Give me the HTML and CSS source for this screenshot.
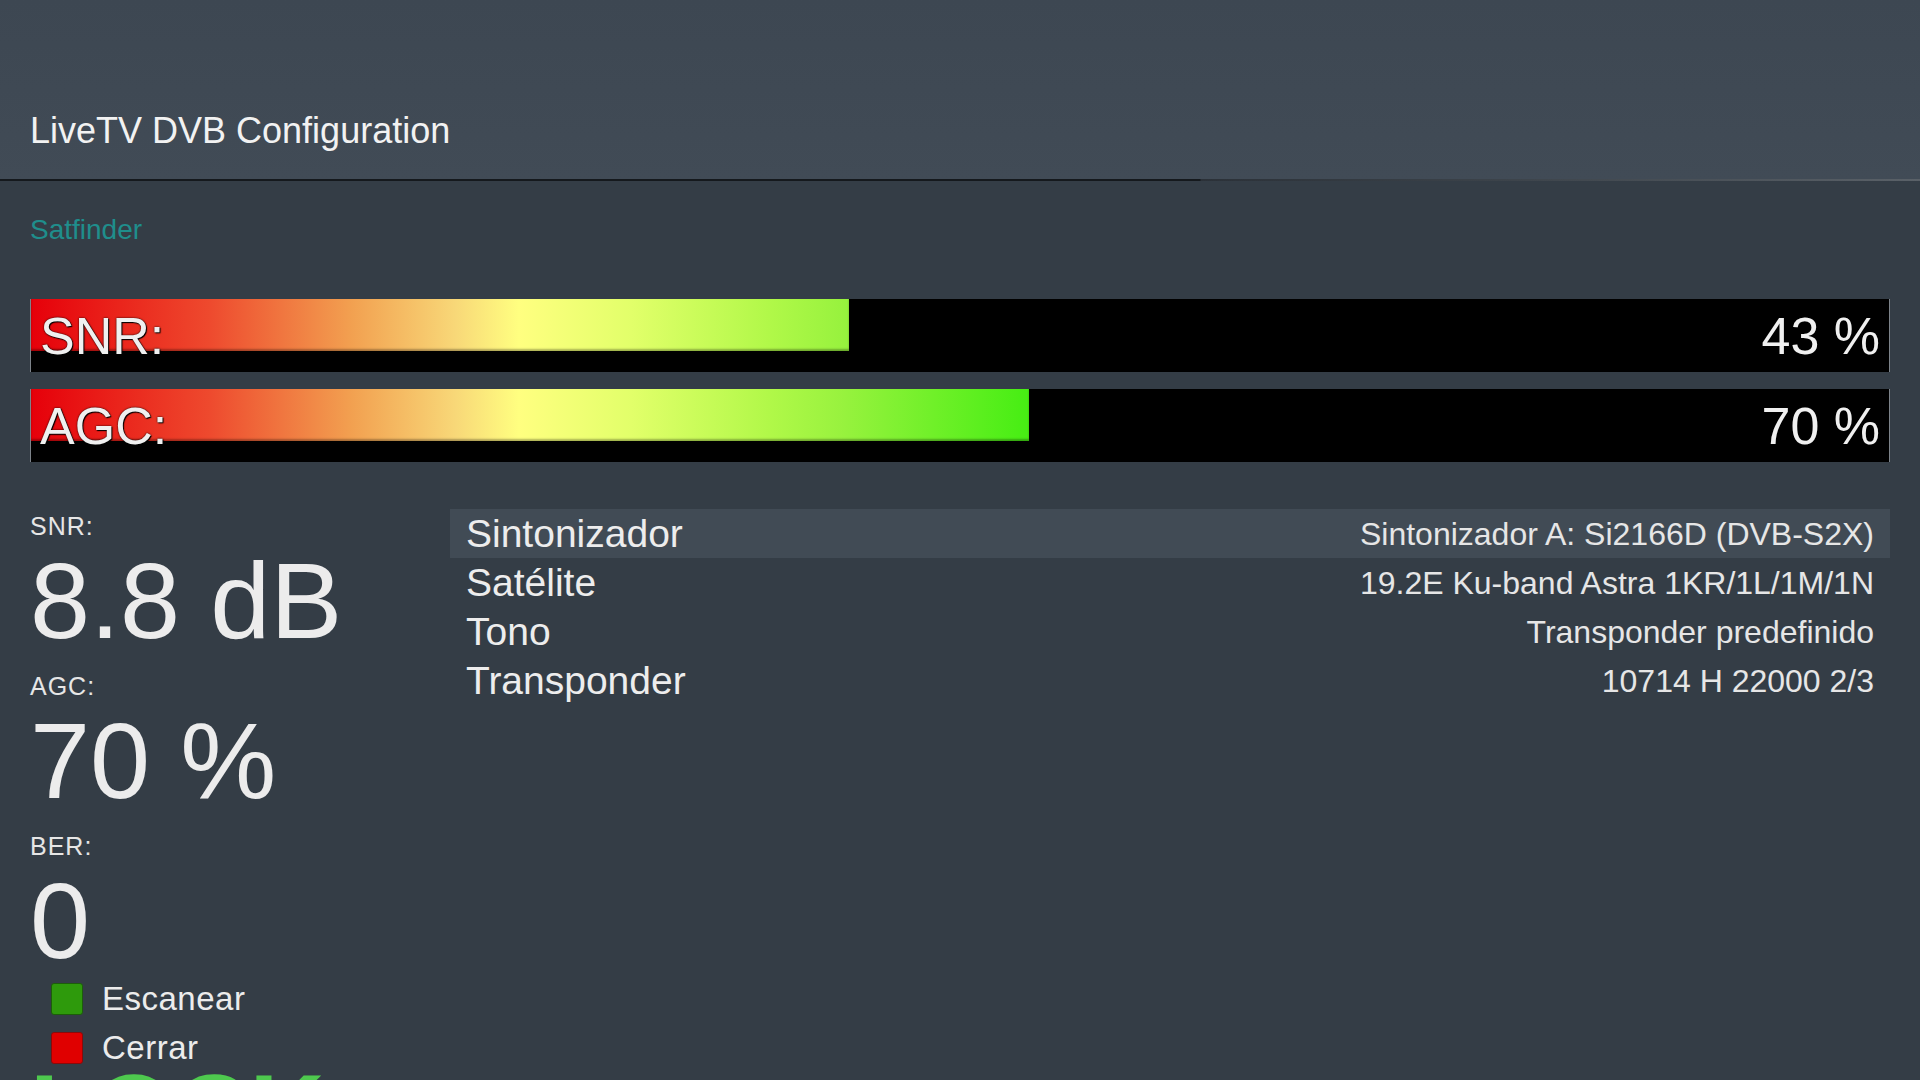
FILE: index.html
```html
<!DOCTYPE html>
<html lang="es">
<head>
<meta charset="utf-8">
<title>LiveTV DVB Configuration</title>
<link rel="stylesheet" href="styles.css">
</head>
<body>
<div class="screen">
  <header class="topbar">
    <h1 class="title">LiveTV DVB Configuration</h1>
  </header>
  <div class="sep"></div>
  <main class="content">
    <div class="section">Satfinder</div>
    <div class="meters">
      <div class="meter">
        <div class="fill" style="width:818px"></div>
        <span class="mlabel">SNR:</span>
        <span class="mvalue">43 %</span>
      </div>
      <div class="meter">
        <div class="fill" style="width:998px"></div>
        <span class="mlabel">AGC:</span>
        <span class="mvalue">70 %</span>
      </div>
    </div>
    <div class="lower">
      <div class="stats">
        <div class="stat">
          <div class="slabel">SNR:</div>
          <div class="svalue">8.8 dB</div>
        </div>
        <div class="stat">
          <div class="slabel">AGC:</div>
          <div class="svalue">70 %</div>
        </div>
        <div class="stat">
          <div class="slabel">BER:</div>
          <div class="svalue">0</div>
        </div>
        <div class="buttons">
          <div class="btn"><span class="key key-green"></span><span class="btext">Escanear</span></div>
          <div class="btn"><span class="key key-red"></span><span class="btext">Cerrar</span></div>
        </div>
        <div class="lock">LOCK</div>
      </div>
      <div class="table">
        <div class="row row-focus"><span class="rlabel">Sintonizador</span><span class="rvalue">Sintonizador A: Si2166D (DVB-S2X)</span></div>
        <div class="row"><span class="rlabel">Satélite</span><span class="rvalue">19.2E Ku-band Astra 1KR/1L/1M/1N</span></div>
        <div class="row"><span class="rlabel">Tono</span><span class="rvalue">Transponder predefinido</span></div>
        <div class="row"><span class="rlabel">Transponder</span><span class="rvalue">10714 H 22000 2/3</span></div>
      </div>
    </div>
  </main>
</div>
</body>
</html>
```

FILE: styles.css
```css
html, body {
  margin: 0;
  padding: 0;
}

body {
  background: #343d46;
  color: #ebebeb;
  font-family: "Liberation Sans", Arial, sans-serif;
  overflow: hidden;
}

.screen {
  width: 1920px;
  height: 1080px;
  overflow: hidden;
}

.topbar {
  box-sizing: border-box;
  height: 179px;
  padding: 113px 30px 0;
  background: linear-gradient(to bottom, #3d4752 0%, #414b56 100%);
}

.title {
  margin: 0;
  font-size: 36px;
  line-height: 36px;
  font-weight: normal;
  color: #f2f2f2;
}

.sep {
  height: 2px;
  background: linear-gradient(to right, #15191d 0, #15191d 1200px, #2b3138 1201px, #3c434a 1500px, #5a6168 100%);
}

.content {
  padding: 35px 30px 0;
  display: flex;
  flex-direction: column;
}

.section {
  font-size: 28px;
  line-height: 28px;
  color: #1f8e8c;
}

.meters {
  margin-top: 55px;
  display: flex;
  flex-direction: column;
  gap: 17px;
}

.meter {
  box-sizing: border-box;
  width: 1860px;
  height: 73px;
  background: #000;
  border-left: 1px solid #7d838a;
  border-right: 1px solid #7d838a;
  display: grid;
  grid-template-columns: 1fr;
  grid-template-rows: 1fr;
}

.meter > * {
  grid-area: 1 / 1;
}

.fill {
  align-self: start;
  height: 52px;
  background: linear-gradient(to right,
    #e6000a 0px,
    #ee4a2e 179px,
    #f2a050 320px,
    #f8d878 425px,
    #ffff80 488px,
    #e2ff6a 600px,
    #b0f848 741px,
    #98f23e 811px,
    #48ee14 993px,
    #44ee10 1200px);
  box-shadow: inset 0 -2px 2px rgba(0, 0, 0, 0.3);
}

.mlabel,
.mvalue {
  align-self: center;
  font-size: 52px;
  line-height: 52px;
  color: #f0f0f0;
  text-shadow: 0 0 2px #000, 1px 1px 1px #000;
}

.mlabel {
  justify-self: start;
  padding-left: 9px;
}

.mvalue {
  justify-self: end;
  padding-right: 9px;
}

.lower {
  margin-top: 47px;
  display: flex;
}

.stats {
  width: 420px;
  flex: none;
  padding-top: 5px;
  display: flex;
  flex-direction: column;
}

.stat + .stat {
  margin-top: 20px;
}

.slabel {
  font-size: 25px;
  line-height: 24px;
  letter-spacing: 1px;
  color: #e6e6e6;
}

.svalue {
  margin-top: 10px;
  font-size: 108px;
  line-height: 106px;
  color: #ececec;
}

.buttons {
  margin-top: 9px;
  padding-left: 21px;
  display: flex;
  flex-direction: column;
  gap: 17px;
}

.btn {
  display: flex;
  align-items: center;
  gap: 19px;
  height: 32px;
}

.key {
  box-sizing: border-box;
  width: 32px;
  height: 32px;
  border-radius: 3px;
}

.key-green {
  background: #2e9a0c;
  border: 1px solid #1c5e0a;
}

.key-red {
  background: #e00000;
  border: 1px solid #8a0a0a;
}

.btext {
  font-size: 33px;
  line-height: 32px;
  letter-spacing: 0.5px;
  color: #ececec;
}

.lock {
  margin-top: 2px;
  font-size: 104px;
  line-height: 90px;
  font-weight: bold;
  color: #4ec94e;
}

.table {
  flex: 1;
  display: flex;
  flex-direction: column;
}

.row {
  height: 49px;
  padding: 0 16px;
  display: flex;
  align-items: center;
  justify-content: space-between;
}

.row-focus {
  background: #414b55;
}

.rlabel {
  font-size: 39px;
  line-height: 39px;
  color: #ededed;
}

.rvalue {
  font-size: 32px;
  line-height: 32px;
  color: #e6e6e6;
}
```
